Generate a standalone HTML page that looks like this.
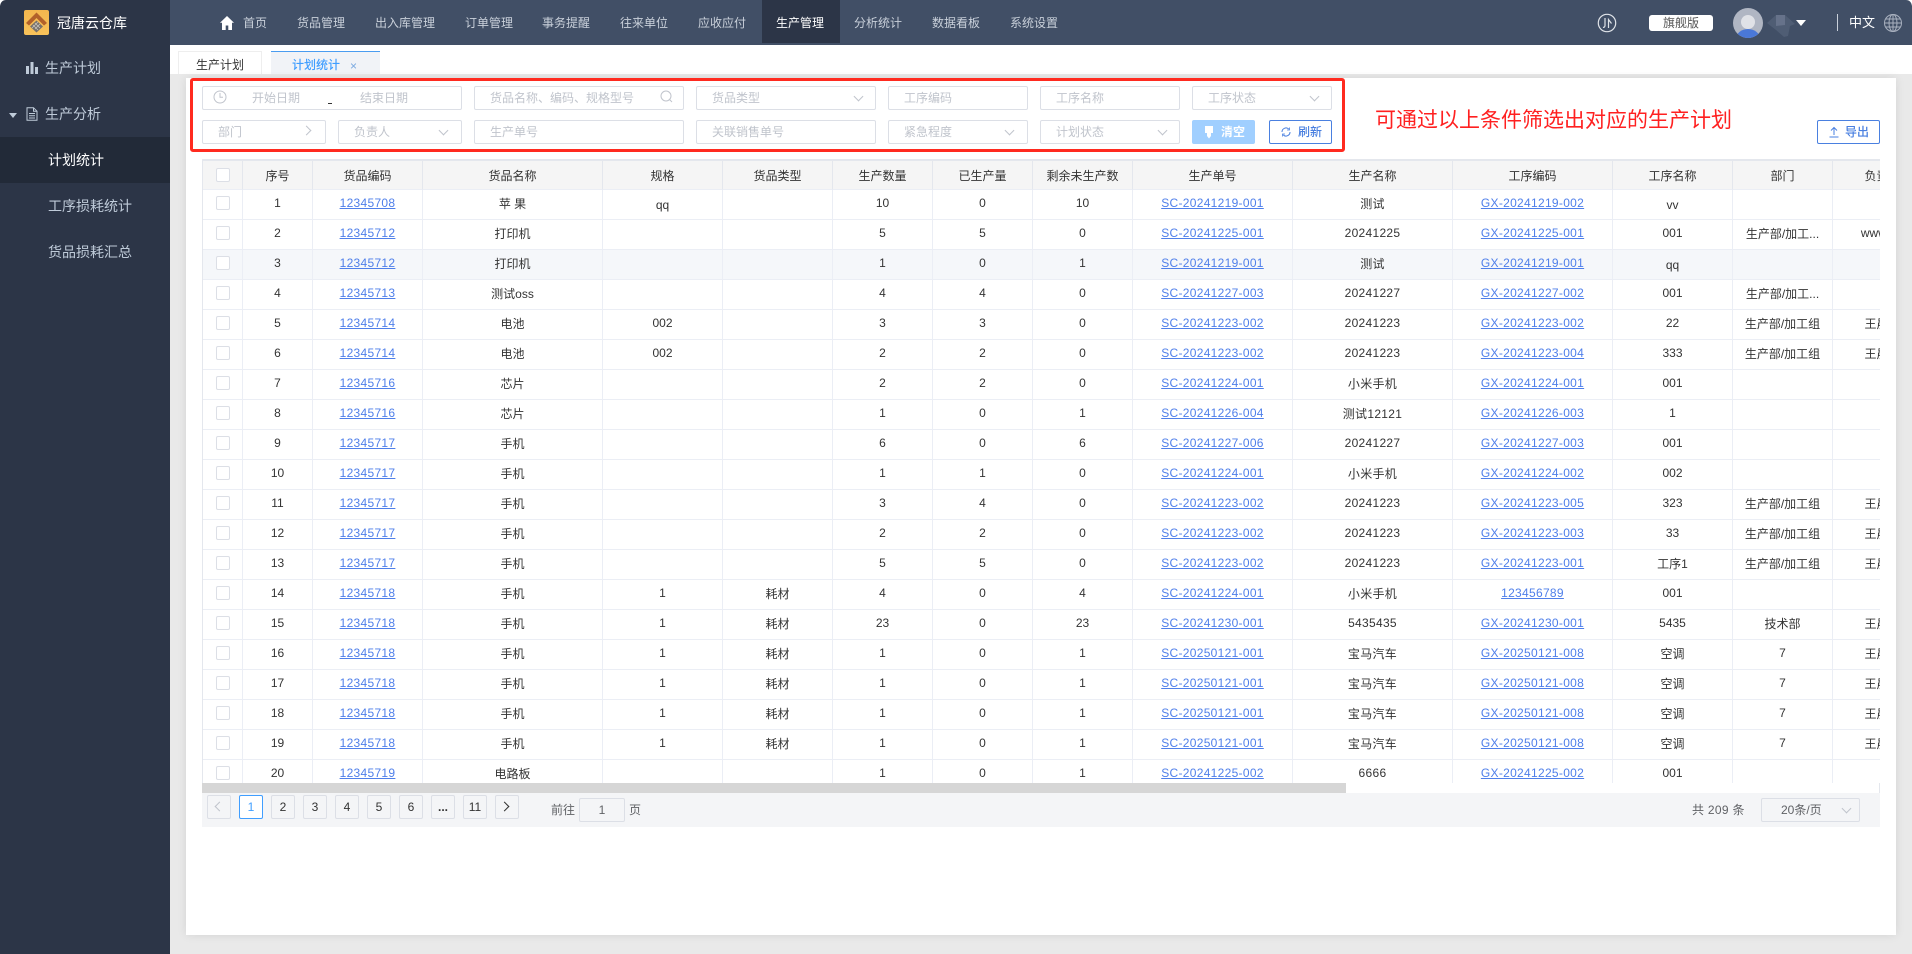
<!DOCTYPE html>
<html lang="zh-CN">
<head>
<meta charset="utf-8">
<title>计划统计</title>
<style>
*{box-sizing:border-box}
html,body{margin:0;padding:0;width:1912px;height:954px;overflow:hidden;background:#e9e9e9;font-family:"Liberation Sans","Noto Sans CJK SC",sans-serif;font-size:12px;color:#333}
.abs,.i,.b,.t{position:absolute}
#side{position:absolute;left:0;top:0;width:170px;height:954px;background:#2c3547}
#top{position:absolute;left:170px;top:0;width:1742px;height:45px;background:#414f66}
.s{position:absolute;font-size:14px;color:#bfcbd9;line-height:20px;white-space:nowrap}
.n{position:absolute;top:13px;font-size:12px;line-height:20px;color:#c9d0da;white-space:nowrap}
#band{position:absolute;left:170px;top:45px;width:1742px;height:29px;background:#fff}
#card{position:absolute;left:186px;top:78px;width:1710px;height:857px;background:#fff;box-shadow:0 0 9px rgba(0,0,0,.09)}
.i{height:24px;border:1px solid #dcdfe6;border-radius:2px;background:#fff}
.p{position:absolute;color:#c0c4cc;font-size:12px;line-height:20px;white-space:nowrap}
.c{position:absolute;width:7px;height:7px;border-right:1px solid #c0c4cc;border-bottom:1px solid #c0c4cc;transform:rotate(45deg)}
.r{position:absolute;width:7px;height:7px;border-right:1px solid #c0c4cc;border-top:1px solid #c0c4cc;transform:rotate(45deg)}
#wrap{position:absolute;left:203px;top:159px;width:1677px;height:624px;overflow:hidden}
table{border-collapse:separate;border-spacing:0;table-layout:fixed;width:1730px}
th{height:31px;background:#f5f5f5;font-weight:400;color:#333;border-top:2px solid #e4e7ed;border-right:1px solid #e4e7ed;border-bottom:1px solid #ebeef5;text-align:center;padding:0;white-space:nowrap;overflow:hidden}
td{height:30px;border-right:1px solid #ebeef5;border-bottom:1px solid #ebeef5;text-align:center;padding:0 0 3px;color:#333;white-space:nowrap;overflow:hidden;background:#fff}
td:nth-child(11){letter-spacing:.3px}
tr.h td{background:#f5f7fa}
td a{color:#4f7fea;text-decoration:underline;letter-spacing:.3px}
td u{text-decoration:none;position:relative;top:2px}
.k{display:inline-block;width:14px;height:14px;border:1px solid #dcdfe6;border-radius:2px;background:#fff;vertical-align:middle}
.b{top:795px;width:24px;height:24px;border:1px solid #dcdfe6;border-radius:2px;background:#f4f5f7;text-align:center;line-height:22px;color:#333;font-size:12px}
.t{font-size:12px;line-height:20px;white-space:nowrap;color:#606266}
</style>
</head>
<body>
<div id="side"></div>
<div id="top"></div>
<div id="band"></div>

<!-- logo -->
<svg class="abs" style="left:24px;top:10px" width="25" height="25" viewBox="0 0 25 25">
<defs><linearGradient id="lg" x1="0" y1="0" x2="0" y2="1"><stop offset="0" stop-color="#f3b64e"/><stop offset="1" stop-color="#f8c25a"/></linearGradient></defs>
<rect width="25" height="25" rx="2" fill="url(#lg)"/>
<path d="M12.5 2.5L23 13l-3 2.5-7.500-7.500L5 15.500 2 13z" fill="#b2612a"/>
<path d="M12.500 10.500L19 16.500l-6.500 6-6.500-6z" fill="#77706a"/>
<path d="M9 15l5 5M11 13l5 5M14 12l-6 6M16 14l-5 5" stroke="#c9c4bd" stroke-width=".8"/>
</svg>
<div class="abs" style="left:57px;top:13px;font-size:14px;line-height:20px;color:#fff;white-space:nowrap">冠唐云仓库</div>

<!-- sidebar -->
<svg class="abs" style="left:26px;top:62px" width="12" height="12" viewBox="0 0 12 12"><path d="M0 4h3v8H0zM4.500 0h3v12h-3zM9 5h3v7H9z" fill="#bfcbd9"/></svg>
<div class="s" style="left:45px;top:58px">生产计划</div>
<div class="abs" style="left:9px;top:113px;width:0;height:0;border-left:4px solid transparent;border-right:4px solid transparent;border-top:5px solid #bfcbd9"></div>
<svg class="abs" style="left:26px;top:107px" width="12" height="14" viewBox="0 0 12 14"><path d="M1 .7h6.500L11 4.200v9H1zM7.500.7v3.500H11M3 6.500h6M3 8.700h6M3 11h6" fill="none" stroke="#bfcbd9" stroke-width="1"/></svg>
<div class="s" style="left:45px;top:104px">生产分析</div>
<div class="abs" style="left:0;top:137px;width:170px;height:46px;background:#222a38"></div>
<div class="s" style="left:48px;top:150px;color:#fff">计划统计</div>
<div class="s" style="left:48px;top:196px">工序损耗统计</div>
<div class="s" style="left:48px;top:242px">货品损耗汇总</div>

<!-- top nav -->
<svg class="abs" style="left:219px;top:15px" width="16" height="16" viewBox="0 0 16 16"><path d="M8 1L1 7.800h2V15h3.700v-4.500h2.600V15H13V7.800h2z" fill="#fff"/></svg>
<div class="n" style="left:243px">首页</div>
<div class="n" style="left:297px">货品管理</div>
<div class="n" style="left:375px">出入库管理</div>
<div class="n" style="left:465px">订单管理</div>
<div class="n" style="left:542px">事务提醒</div>
<div class="n" style="left:620px">往来单位</div>
<div class="n" style="left:698px">应收应付</div>
<div class="abs" style="left:762px;top:0;width:78px;height:43px;background:#2c3547"></div>
<div class="n" style="left:776px;color:#fff">生产管理</div>
<div class="n" style="left:854px">分析统计</div>
<div class="n" style="left:932px">数据看板</div>
<div class="n" style="left:1010px">系统设置</div>

<svg class="abs" style="left:1597px;top:13px" width="20" height="20" viewBox="0 0 20 20"><circle cx="10" cy="10" r="8.700" fill="none" stroke="#dfe3e8" stroke-width="1.200"/><path d="M8 5v7.500c0 1.500-1 2-2 1.800M11.500 15V6.500l3 4" fill="none" stroke="#dfe3e8" stroke-width="1.200"/></svg>
<div class="abs" style="left:1649px;top:15px;width:64px;height:16px;background:#fff;border-radius:3px;text-align:center;line-height:16px;color:#555">旗舰版</div>
<svg class="abs" style="left:1733px;top:8px" width="30" height="30" viewBox="0 0 30 30"><defs><clipPath id="av"><circle cx="15" cy="15" r="15"/></clipPath></defs><g clip-path="url(#av)"><rect width="30" height="30" fill="#b0b6c3"/><circle cx="15" cy="14" r="7" fill="#e0e2e7"/><ellipse cx="15" cy="31" rx="12" ry="10" fill="#4a78d8"/></g></svg>
<svg class="abs" style="left:1766px;top:12px" width="30" height="26" viewBox="0 0 30 26"><path d="M1 11L10 3h9l10 9-5 2-2 10-4 1-8-7z" fill="#4f5d74"/><path d="M10 3h9v10l-9 1z" fill="#66728a"/></svg>
<div class="abs" style="left:1796px;top:20px;width:0;height:0;border-left:5.500px solid transparent;border-right:5.500px solid transparent;border-top:6px solid #fff"></div>
<div class="abs" style="left:1837px;top:14px;width:1px;height:17px;background:#c9d0da"></div>
<div class="abs" style="left:1849px;top:13px;font-size:13px;line-height:20px;color:#fff;white-space:nowrap">中文</div>
<svg class="abs" style="left:1883px;top:13px" width="20" height="20" viewBox="0 0 20 20"><g fill="none" stroke="#a9b1bf" stroke-width="1"><circle cx="10" cy="10" r="8.500"/><ellipse cx="10" cy="10" rx="4" ry="8.500"/><path d="M10 1.500v17M1.500 10h17M2.700 6h14.600M2.700 14h14.600"/></g></svg>

<!-- tabs -->
<div class="abs" style="left:178px;top:51px;width:84px;height:23px;background:#fff;border:1px solid #eee;border-bottom:0;text-align:center;line-height:26px">生产计划</div>
<div class="abs" style="left:271px;top:51px;width:109px;height:23px;background:#f1f3f7;border-top:1px solid #4a9cf0"></div>
<div class="abs" style="left:292px;top:55px;line-height:20px;color:#409eff;font-weight:500;white-space:nowrap">计划统计</div>
<div class="abs" style="left:350px;top:56px;line-height:20px;color:#7aa9e0;font-size:12px">×</div>

<!-- card -->
<div id="card"></div>

<!-- filter inputs row 1 -->
<div class="i" style="left:202px;top:86px;width:260px"></div>
<svg class="abs" style="left:213px;top:90px" width="14" height="14" viewBox="0 0 14 14"><circle cx="7" cy="7" r="6" fill="none" stroke="#c0c4cc"/><path d="M7 3v4.300h3" fill="none" stroke="#c0c4cc"/></svg>
<div class="p" style="left:252px;top:88px">开始日期</div>
<div class="abs" style="left:328px;top:103px;width:4px;height:1px;background:#333"></div>
<div class="p" style="left:360px;top:88px">结束日期</div>
<div class="i" style="left:474px;top:86px;width:210px"></div>
<div class="p" style="left:490px;top:88px">货品名称、编码、规格型号</div>
<svg class="abs" style="left:660px;top:90px" width="13" height="13" viewBox="0 0 13 13"><circle cx="6" cy="6" r="5" fill="none" stroke="#c0c4cc"/><path d="M9.500 9.500l2.500 2.500" stroke="#c0c4cc"/></svg>
<div class="i" style="left:696px;top:86px;width:180px"></div>
<div class="p" style="left:712px;top:88px">货品类型</div>
<div class="c" style="left:855px;top:93px"></div>
<div class="i" style="left:888px;top:86px;width:140px"></div>
<div class="p" style="left:904px;top:88px">工序编码</div>
<div class="i" style="left:1040px;top:86px;width:140px"></div>
<div class="p" style="left:1056px;top:88px">工序名称</div>
<div class="i" style="left:1192px;top:86px;width:140px"></div>
<div class="p" style="left:1208px;top:88px">工序状态</div>
<div class="c" style="left:1311px;top:93px"></div>

<!-- filter inputs row 2 -->
<div class="i" style="left:202px;top:120px;width:124px"></div>
<div class="p" style="left:218px;top:122px">部门</div>
<div class="r" style="left:303px;top:127px"></div>
<div class="i" style="left:338px;top:120px;width:124px"></div>
<div class="p" style="left:354px;top:122px">负责人</div>
<div class="c" style="left:440px;top:127px"></div>
<div class="i" style="left:474px;top:120px;width:210px"></div>
<div class="p" style="left:490px;top:122px">生产单号</div>
<div class="i" style="left:696px;top:120px;width:180px"></div>
<div class="p" style="left:712px;top:122px">关联销售单号</div>
<div class="i" style="left:888px;top:120px;width:140px"></div>
<div class="p" style="left:904px;top:122px">紧急程度</div>
<div class="c" style="left:1006px;top:127px"></div>
<div class="i" style="left:1040px;top:120px;width:140px"></div>
<div class="p" style="left:1056px;top:122px">计划状态</div>
<div class="c" style="left:1159px;top:127px"></div>

<!-- buttons -->
<div class="abs" style="left:1192px;top:120px;width:63px;height:24px;background:#a0cfff;border-radius:2px"></div>
<svg class="abs" style="left:1204px;top:126px" width="10" height="13" viewBox="0 0 10 13"><path d="M1 0h8v7H7v3L5 12.500 3 10V7H1z" fill="#fff"/></svg>
<div class="abs" style="left:1221px;top:122px;line-height:20px;color:#fff;font-weight:700;white-space:nowrap">清空</div>
<div class="abs" style="left:1269px;top:120px;width:63px;height:24px;border:1px solid #4a80e0;border-radius:2px;background:#fff"></div>
<svg class="abs" style="left:1281px;top:127px" width="10" height="10" viewBox="0 0 10 10"><path d="M1 5a4 4 0 0 1 6.800-2.900M9 5a4 4 0 0 1-6.800 2.900" fill="none" stroke="#4a80e0"/><path d="M8.500.5v2.500H6M1.500 9.500V7H4" fill="none" stroke="#4a80e0" stroke-width=".8"/></svg>
<div class="abs" style="left:1298px;top:122px;line-height:20px;color:#4a80e0;font-weight:500;white-space:nowrap">刷新</div>
<div class="abs" style="left:1817px;top:120px;width:63px;height:24px;border:1px solid #4a80e0;border-radius:2px;background:#fff"></div>
<svg class="abs" style="left:1829px;top:126px" width="10" height="12" viewBox="0 0 10 12"><path d="M5 9V1.500M2 4.500l3-3 3 3M.5 11h9" fill="none" stroke="#4a80e0"/></svg>
<div class="abs" style="left:1845px;top:122px;line-height:20px;color:#4a80e0;font-weight:500;white-space:nowrap">导出</div>

<!-- red annotation -->
<div class="abs" style="left:190px;top:78px;width:1155px;height:74px;border:3px solid #ff2a1f;border-radius:3px"></div>
<div class="abs" style="left:1375px;top:106px;font-size:21px;line-height:30px;color:#ff2020;white-space:nowrap">可通过以上条件筛选出对应的生产计划</div>

<!-- table -->
<div class="abs" style="left:202px;top:159px;width:1px;height:624px;background:#e4e7ed"></div>
<div id="wrap">
<table>
<colgroup><col style="width:40px"><col style="width:70px"><col style="width:110px"><col style="width:180px"><col style="width:120px"><col style="width:110px"><col style="width:100px"><col style="width:100px"><col style="width:100px"><col style="width:160px"><col style="width:160px"><col style="width:160px"><col style="width:120px"><col style="width:100px"><col style="width:100px"></colgroup>
<thead><tr><th><span class="k"></span></th><th>序号</th><th>货品编码</th><th>货品名称</th><th>规格</th><th>货品类型</th><th>生产数量</th><th>已生产量</th><th>剩余未生产数</th><th>生产单号</th><th>生产名称</th><th>工序编码</th><th>工序名称</th><th>部门</th><th>负责人</th></tr></thead>
<tbody>
<tr><td><span class="k"></span></td><td>1</td><td><a>12345708</a></td><td>苹 果</td><td><u>qq</u></td><td></td><td>10</td><td>0</td><td>10</td><td><a>SC-20241219-001</a></td><td>测试</td><td><a>GX-20241219-002</a></td><td><u>vv</u></td><td></td><td></td></tr>
<tr><td><span class="k"></span></td><td>2</td><td><a>12345712</a></td><td>打印机</td><td></td><td></td><td>5</td><td>5</td><td>0</td><td><a>SC-20241225-001</a></td><td>20241225</td><td><a>GX-20241225-001</a></td><td>001</td><td>生产部/加工...</td><td>wwwww</td></tr>
<tr class="h"><td><span class="k"></span></td><td>3</td><td><a>12345712</a></td><td>打印机</td><td></td><td></td><td>1</td><td>0</td><td>1</td><td><a>SC-20241219-001</a></td><td>测试</td><td><a>GX-20241219-001</a></td><td><u>qq</u></td><td></td><td></td></tr>
<tr><td><span class="k"></span></td><td>4</td><td><a>12345713</a></td><td>测试oss</td><td></td><td></td><td>4</td><td>4</td><td>0</td><td><a>SC-20241227-003</a></td><td>20241227</td><td><a>GX-20241227-002</a></td><td>001</td><td>生产部/加工...</td><td></td></tr>
<tr><td><span class="k"></span></td><td>5</td><td><a>12345714</a></td><td>电池</td><td>002</td><td></td><td>3</td><td>3</td><td>0</td><td><a>SC-20241223-002</a></td><td>20241223</td><td><a>GX-20241223-002</a></td><td>22</td><td>生产部/加工组</td><td>王晨晨</td></tr>
<tr><td><span class="k"></span></td><td>6</td><td><a>12345714</a></td><td>电池</td><td>002</td><td></td><td>2</td><td>2</td><td>0</td><td><a>SC-20241223-002</a></td><td>20241223</td><td><a>GX-20241223-004</a></td><td>333</td><td>生产部/加工组</td><td>王晨晨</td></tr>
<tr><td><span class="k"></span></td><td>7</td><td><a>12345716</a></td><td>芯片</td><td></td><td></td><td>2</td><td>2</td><td>0</td><td><a>SC-20241224-001</a></td><td>小米手机</td><td><a>GX-20241224-001</a></td><td>001</td><td></td><td></td></tr>
<tr><td><span class="k"></span></td><td>8</td><td><a>12345716</a></td><td>芯片</td><td></td><td></td><td>1</td><td>0</td><td>1</td><td><a>SC-20241226-004</a></td><td>测试12121</td><td><a>GX-20241226-003</a></td><td>1</td><td></td><td></td></tr>
<tr><td><span class="k"></span></td><td>9</td><td><a>12345717</a></td><td>手机</td><td></td><td></td><td>6</td><td>0</td><td>6</td><td><a>SC-20241227-006</a></td><td>20241227</td><td><a>GX-20241227-003</a></td><td>001</td><td></td><td></td></tr>
<tr><td><span class="k"></span></td><td>10</td><td><a>12345717</a></td><td>手机</td><td></td><td></td><td>1</td><td>1</td><td>0</td><td><a>SC-20241224-001</a></td><td>小米手机</td><td><a>GX-20241224-002</a></td><td>002</td><td></td><td></td></tr>
<tr><td><span class="k"></span></td><td>11</td><td><a>12345717</a></td><td>手机</td><td></td><td></td><td>3</td><td>4</td><td>0</td><td><a>SC-20241223-002</a></td><td>20241223</td><td><a>GX-20241223-005</a></td><td>323</td><td>生产部/加工组</td><td>王晨晨</td></tr>
<tr><td><span class="k"></span></td><td>12</td><td><a>12345717</a></td><td>手机</td><td></td><td></td><td>2</td><td>2</td><td>0</td><td><a>SC-20241223-002</a></td><td>20241223</td><td><a>GX-20241223-003</a></td><td>33</td><td>生产部/加工组</td><td>王晨晨</td></tr>
<tr><td><span class="k"></span></td><td>13</td><td><a>12345717</a></td><td>手机</td><td></td><td></td><td>5</td><td>5</td><td>0</td><td><a>SC-20241223-002</a></td><td>20241223</td><td><a>GX-20241223-001</a></td><td>工序1</td><td>生产部/加工组</td><td>王晨晨</td></tr>
<tr><td><span class="k"></span></td><td>14</td><td><a>12345718</a></td><td>手机</td><td>1</td><td>耗材</td><td>4</td><td>0</td><td>4</td><td><a>SC-20241224-001</a></td><td>小米手机</td><td><a>123456789</a></td><td>001</td><td></td><td></td></tr>
<tr><td><span class="k"></span></td><td>15</td><td><a>12345718</a></td><td>手机</td><td>1</td><td>耗材</td><td>23</td><td>0</td><td>23</td><td><a>SC-20241230-001</a></td><td>5435435</td><td><a>GX-20241230-001</a></td><td>5435</td><td>技术部</td><td>王晨晨</td></tr>
<tr><td><span class="k"></span></td><td>16</td><td><a>12345718</a></td><td>手机</td><td>1</td><td>耗材</td><td>1</td><td>0</td><td>1</td><td><a>SC-20250121-001</a></td><td>宝马汽车</td><td><a>GX-20250121-008</a></td><td>空调</td><td>7</td><td>王晨晨</td></tr>
<tr><td><span class="k"></span></td><td>17</td><td><a>12345718</a></td><td>手机</td><td>1</td><td>耗材</td><td>1</td><td>0</td><td>1</td><td><a>SC-20250121-001</a></td><td>宝马汽车</td><td><a>GX-20250121-008</a></td><td>空调</td><td>7</td><td>王晨晨</td></tr>
<tr><td><span class="k"></span></td><td>18</td><td><a>12345718</a></td><td>手机</td><td>1</td><td>耗材</td><td>1</td><td>0</td><td>1</td><td><a>SC-20250121-001</a></td><td>宝马汽车</td><td><a>GX-20250121-008</a></td><td>空调</td><td>7</td><td>王晨晨</td></tr>
<tr><td><span class="k"></span></td><td>19</td><td><a>12345718</a></td><td>手机</td><td>1</td><td>耗材</td><td>1</td><td>0</td><td>1</td><td><a>SC-20250121-001</a></td><td>宝马汽车</td><td><a>GX-20250121-008</a></td><td>空调</td><td>7</td><td>王晨晨</td></tr>
<tr><td><span class="k"></span></td><td>20</td><td><a>12345719</a></td><td>电路板</td><td></td><td></td><td>1</td><td>0</td><td>1</td><td><a>SC-20241225-002</a></td><td>6666</td><td><a>GX-20241225-002</a></td><td>001</td><td></td><td></td></tr>
</tbody>
</table>
</div>

<!-- scrollbar + pagination -->
<div class="abs" style="left:202px;top:783px;width:1678px;height:10px;background:#fff;border-right:1px solid #e4e7ed"></div>
<div class="abs" style="left:202px;top:783px;width:1144px;height:10px;background:#d6d6d6"></div>
<div class="abs" style="left:202px;top:793px;width:1678px;height:34px;background:#f4f5f7"></div>
<div class="b" style="left:207px"></div>
<div class="abs" style="left:216px;top:803px;width:7px;height:7px;border-left:1.500px solid #c0c4cc;border-bottom:1.500px solid #c0c4cc;transform:rotate(45deg)"></div>
<div class="b" style="left:239px;background:#fff;border-color:#409eff;color:#409eff">1</div>
<div class="b" style="left:271px">2</div>
<div class="b" style="left:303px">3</div>
<div class="b" style="left:335px">4</div>
<div class="b" style="left:367px">5</div>
<div class="b" style="left:399px">6</div>
<div class="b" style="left:431px;font-weight:700">...</div>
<div class="b" style="left:463px">11</div>
<div class="b" style="left:495px"></div>
<div class="abs" style="left:501px;top:803px;width:7px;height:7px;border-right:1.500px solid #333;border-top:1.500px solid #333;transform:rotate(45deg)"></div>
<div class="t" style="left:551px;top:800px">前往</div>
<div class="abs" style="left:579px;top:798px;width:46px;height:24px;border:1px solid #dcdfe6;border-radius:2px;background:#f4f5f7;text-align:center;line-height:22px;color:#606266">1</div>
<div class="t" style="left:629px;top:800px">页</div>
<div class="t" style="left:1692px;top:800px;letter-spacing:.3px">共 209 条</div>
<div class="abs" style="left:1761px;top:798px;width:99px;height:24px;border:1px solid #dcdfe6;border-radius:2px;background:#f4f5f7"></div>
<div class="t" style="left:1781px;top:800px">20条/页</div>
<div class="c" style="left:1843px;top:805px"></div>

<!-- window corners -->
<svg class="abs" style="left:0;top:0" width="6" height="6" viewBox="0 0 6 6"><path d="M0 0h6Q1 0 0 6z" fill="#fff"/></svg>
<svg class="abs" style="left:1906px;top:0" width="6" height="6" viewBox="0 0 6 6"><path d="M0 0h6v6Q5 0 0 0z" fill="#fff"/></svg>
</body>
</html>
